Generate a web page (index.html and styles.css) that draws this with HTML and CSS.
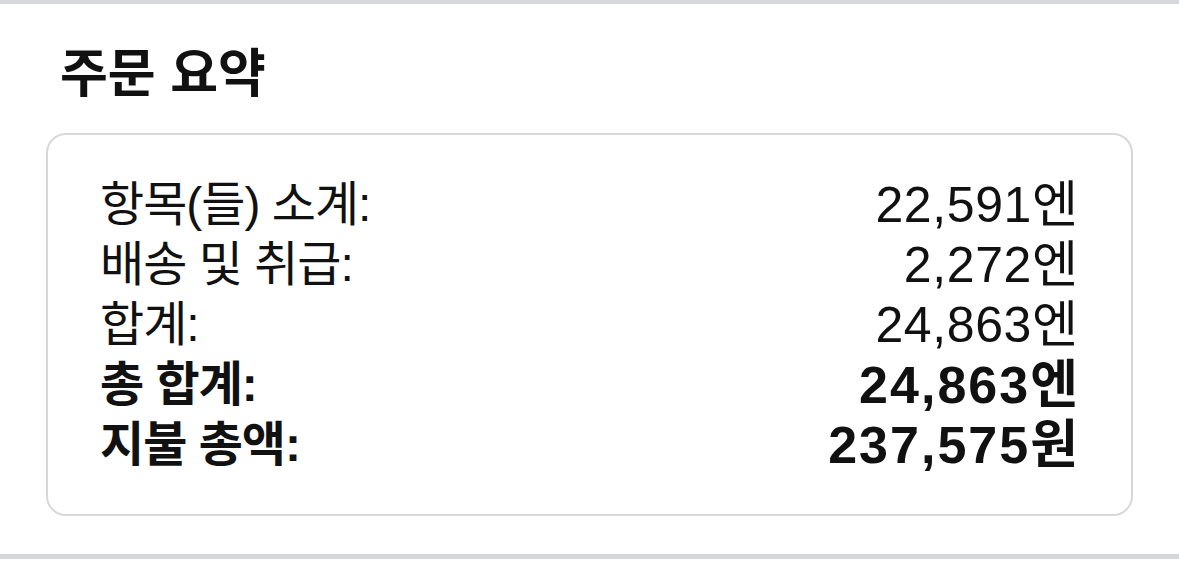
FILE: index.html
```html
<!DOCTYPE html>
<html lang="ko">
<head>
<meta charset="utf-8">
<title>주문 요약</title>
<link rel="stylesheet" href="styles.css">
</head>
<body>
<section class="summary">
  <h2 class="summary-title">주문 요약</h2>
  <div class="summary-card">
    <div class="row"><span class="label">항목(들) 소계:</span><span class="value">22,591엔</span></div>
    <div class="row"><span class="label">배송 및 취급:</span><span class="value">2,272엔</span></div>
    <div class="row"><span class="label">합계:</span><span class="value">24,863엔</span></div>
    <div class="row strong"><span class="label">총 합계:</span><span class="value">24,863엔</span></div>
    <div class="row strong"><span class="label">지불 총액:</span><span class="value">237,575원</span></div>
  </div>
</section>
</body>
</html>
```

FILE: styles.css
```css
html, body {
  margin: 0;
  padding: 0;
  background: #ffffff;
}
body {
  font-family: "Liberation Sans", "Noto Sans CJK KR", sans-serif;
  color: #111111;
}
.summary {
  border-top: 4px solid #d6d7d9;
  border-bottom: 5px solid #d6d7d9;
  padding: 40px 46px 38px 46px;
}
.summary-title {
  margin: 0 0 29px 14px;
  font-size: 52px;
  line-height: 60px;
  font-weight: 700;
  color: #111111;
}
.summary-card {
  border: 2px solid #d8d8d8;
  border-radius: 20px;
  padding: 40px 53px 39px 52px;
  display: flex;
  flex-direction: column;
}
.row {
  display: flex;
  justify-content: space-between;
  align-items: center;
  height: 60px;
  font-size: 48px;
  line-height: 60px;
}
.label {
  letter-spacing: -1px;
}
.value {
  font-size: 50px;
  letter-spacing: 0.6px;
  margin-right: -0.6px;
}
.row.strong {
  font-weight: 700;
}
.row.strong .value {
  font-size: 52px;
  letter-spacing: 2px;
  margin-right: -2px;
}
```
